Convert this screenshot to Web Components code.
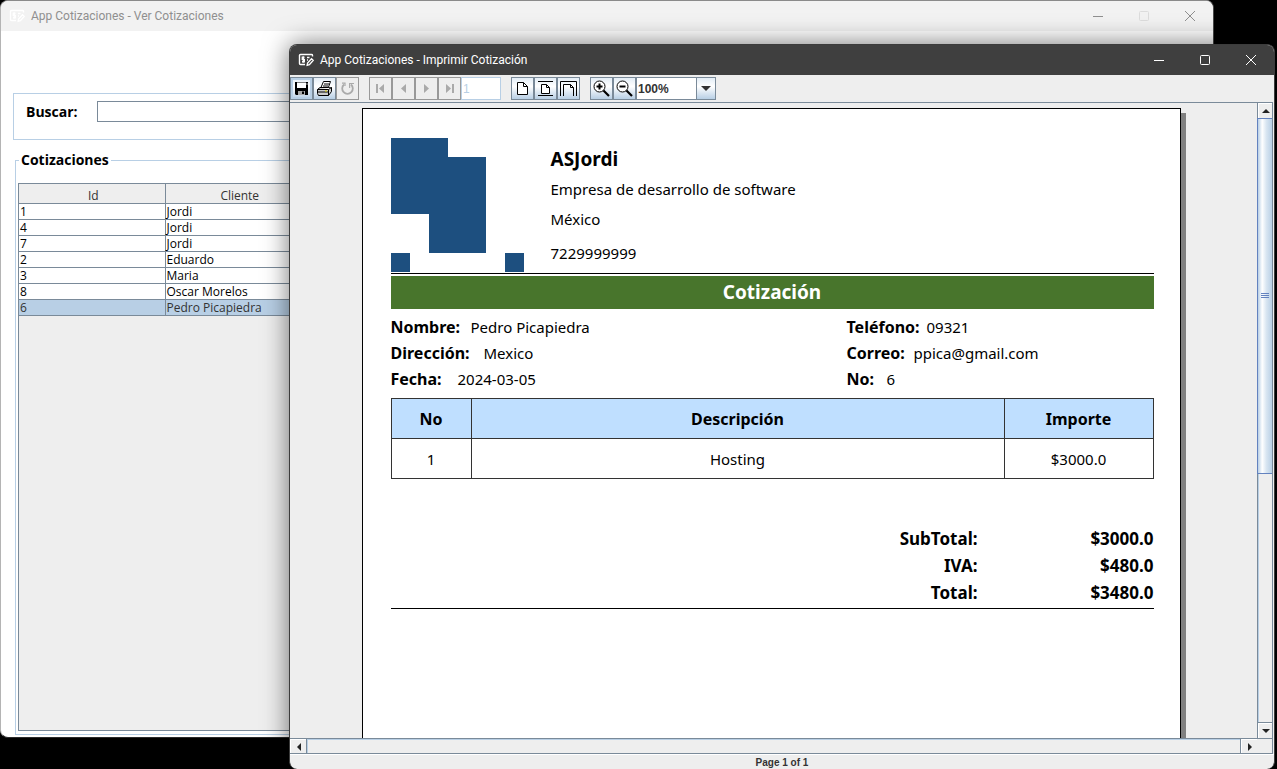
<!DOCTYPE html>
<html lang="es">
<head>
<meta charset="utf-8">
<title>App Cotizaciones</title>
<style>
  html, body { margin: 0; height: 100%; background: #000; overflow: hidden; }
</style>
</head>
<body>
<app-desktop></app-desktop>

<script>
const define = (name, html, setup) => {
  const template = document.createElement('template');
  template.innerHTML = html;
  customElements.define(name, class extends HTMLElement {
    constructor() {
      super();
      this.attachShadow({ mode: 'open' }).append(template.content.cloneNode(true));
    }
    connectedCallback() { if (setup) setup(this, this.shadowRoot); }
  });
};

/* Window frame with title bar and caption buttons */
define('desktop-window', `
  <style>
    :host { display: flex; flex-direction: column; box-sizing: border-box; overflow: hidden;
      border: 1px solid #3c3c3c; border-bottom: 0; border-radius: 8px; background: #eee; --bar: #3f3f3f; --ink: #fff; --mark: #fff; --box: #fff; }
    :host([inactive]) { border-color: #8a8a8a #4a4a4a #2a2a2a #b4b4b4; border-bottom: 1px solid #2a2a2a; background: #fff; --bar: #f2f2f2; --ink: #8f8f8f; --mark: #fff; --box: #dcdcdc; }
    header { display: flex; align-items: center; height: 30px; flex: none; background: var(--bar); color: var(--ink); }
    .mark { width: 16px; height: 16px; margin: 0 6px 0 8px; color: var(--mark); flex: none; }
    h1 { flex: 1; margin: 0; font: 12px/16px Roboto, "Open Sans", sans-serif; white-space: nowrap; }
    button { width: 46px; height: 30px; padding: 0; border: 0; background: none; color: inherit; display: grid; place-items: center; }
    button svg { width: 12px; height: 12px; }
    button.max { color: var(--box); }
    main { flex: 1; min-height: 0; display: flex; flex-direction: column; }
  </style>
  <header>
    <svg class="mark" viewBox="0 0 16 16" fill="none" stroke="currentColor" stroke-width="1.4">
      <path d="M14.5 4.5V3.2Q14.5 2.5 13.5 2.5H2.5Q1.5 2.5 1.5 3.5V11.5Q1.5 12.5 2.5 12.5H7"/>
      <path d="M6.5 5.2H4.3V7.4H6.3V9.7H4M5.3 4.2V10.8M9 5.5H11.5M9 8H10"/>
      <path d="M9.2 13.2L9.6 11L13.5 6.8L15.2 8.4L11.4 12.6Z"/>
    </svg>
    <h1></h1>
    <button aria-label="Minimizar"><svg viewBox="0 0 12 12" stroke="currentColor"><path d="M1 6.5H11"/></svg></button>
    <button class="max" aria-label="Maximizar"><svg viewBox="0 0 12 12" stroke="currentColor" fill="none"><rect x="1.5" y="1.5" width="9" height="9" rx="1"/></svg></button>
    <button aria-label="Cerrar"><svg viewBox="0 0 12 12" stroke="currentColor"><path d="M1 1L11 11M11 1L1 11"/></svg></button>
  </header>
  <main><slot></slot></main>`,
  (el, root) => { root.querySelector('h1').textContent = el.getAttribute('caption'); });

/* List of saved quotes */
define('quotes-list', `
  <style>
    :host { flex: 1; min-height: 0; display: flex; flex-direction: column; box-sizing: border-box; padding: 62px 12px 2px;
      font-family: "Open Sans", "Noto Sans", sans-serif; color: #000; }
    .search { display: flex; align-items: center; gap: 19px; box-sizing: border-box; height: 47px; padding: 0 12px 10px; border: 1px solid #b8cfe5; }
    label { font-size: 14px; font-weight: 700; line-height: 20px; }
    input { flex: 1; box-sizing: border-box; height: 21px; border: 1px solid #7a8a99; background: #fff; border-radius: 0; }
    fieldset { flex: 1; min-height: 0; min-width: 0; margin: 10px 0 0 2px; padding: 13px 2px 3px; border: 1px solid #b8cfe5; display: flex; }
    legend { padding: 0 2px; margin-left: 1px; font-size: 14px; font-weight: 700; line-height: 20px; }
    .pane { flex: 1; border: 1px solid #7a8a99; background: #eee; overflow: hidden; }
    table { border-collapse: collapse; table-layout: fixed; width: 294px; margin: -1px 0 0 -1px; font-size: 12px; }
    th, td { box-sizing: border-box; border: 1px solid #7a8a99; padding: 0 1px; line-height: 15px; height: 16px; text-align: left; font-weight: 400; white-space: nowrap; background: #fff; }
    th { height: 20px; padding: 3px 0 0 3px; text-align: center; background: #eee; color: #333; }
    tr.sel td { background: #b8cfe5; color: #333; }
  </style>
  <div class="search"><label for="q">Buscar:</label><input id="q"></div>
  <fieldset>
    <legend>Cotizaciones</legend>
    <div class="pane">
      <table>
        <thead><tr><th>Id</th><th>Cliente</th></tr></thead>
        <tbody>
          <tr><td>1</td><td>Jordi</td></tr>
          <tr><td>4</td><td>Jordi</td></tr>
          <tr><td>7</td><td>Jordi</td></tr>
          <tr><td>2</td><td>Eduardo</td></tr>
          <tr><td>3</td><td>Maria</td></tr>
          <tr><td>8</td><td>Oscar Morelos</td></tr>
          <tr class="sel"><td>6</td><td>Pedro Picapiedra</td></tr>
        </tbody>
      </table>
    </div>
  </fieldset>`);

/* Toolbar button */
define('tool-button', `
  <style>
    :host { display: block; }
    button { box-sizing: border-box; width: 23px; height: 23px; padding: 0 1px 1px 0; display: grid; place-items: center;
      border: 1px solid #7a8a99; border-radius: 0; background: linear-gradient(#e3edf6, #fff 40%, #b8cfe5); color: #000; }
    button:disabled { border-color: #999; background: #eee; color: #aaa; }
    :host([focused]) button { box-shadow: inset 0 0 0 2px #b8cfe5; }
    ::slotted(svg) { width: 17px; height: 17px; display: block; }
  </style>
  <button type="button"><slot></slot></button>`,
  (el, root) => {
    const b = root.querySelector('button');
    b.disabled = el.hasAttribute('off');
    b.setAttribute('aria-label', el.getAttribute('hint'));
  });

define('viewer-toolbar', `
  <style>
    :host { display: flex; align-items: center; gap: 10px; height: 27px; flex: none; font-family: "Liberation Sans", sans-serif; }
    .group { display: flex; }
    input, select { box-sizing: border-box; height: 23px; margin: 0; border: 1px solid #b8cfe5; border-radius: 0; background: #fff; }
    input { width: 40px; padding: 0 1px; font: 12px "Liberation Sans", sans-serif; color: #b8cfe5; }
    .combo { display: flex; position: relative; }
    select { appearance: none; width: 80px; padding: 0 1px; border-color: #7a8a99; font: bold 12px "Liberation Sans", sans-serif; color: #333; }
    .arrow { position: absolute; right: 0; top: 0; pointer-events: none; box-sizing: border-box; width: 20px; height: 23px; border: 1px solid #7a8a99;
      background: linear-gradient(#e3edf6, #fff 40%, #b8cfe5); display: grid; place-items: center; }
    .arrow svg { width: 10px; height: 5px; }
  </style>
  <div class="group">
    <tool-button hint="Guardar" focused><svg viewBox="0 0 17 17"><path d="M2 2H15V15H3L2 14Z"/><path d="M4 2.5H13V8H4Z" fill="#fff"/><path d="M5 11H12V15H5Z" fill="#aaa"/><path d="M9 11.5H11V14H9Z" fill="#000"/><path d="M14 3V5" stroke="#fff" stroke-width=".7"/></svg></tool-button>
    <tool-button hint="Imprimir"><svg viewBox="0 0 17 17" stroke="#000" fill="#fff"><path d="M4.5 8.5L7.5 1.5H14.5L12 8.5Z"/><path d="M8 4H13M7 6H12"/><path d="M1.5 9.5L4 7.5H15.5V11.5L12.5 15.5H2.5L1.5 13.5Z" fill="#ccc"/><path d="M1.5 9.5H12.5L15.5 7.5M12.5 9.5V15.5M1.5 12H12.5"/><path d="M9 11H11" stroke="#e8d800"/></svg></tool-button>
    <tool-button hint="Actualizar" off><svg viewBox="0 0 17 17" fill="none" stroke="#aaa" stroke-width="1.8"><path d="M5 4.5A5.3 5.3 0 1 0 12 4.5"/><path d="M10.6 8V3.5H15M3 3.2H6V6" stroke-width="1.2"/></svg></tool-button>
  </div>
  <div class="group">
    <tool-button hint="Primera" off><svg viewBox="0 0 17 17" fill="#aaa"><path d="M4 4H6V13H4ZM12 4V13L7 8.5Z"/></svg></tool-button>
    <tool-button hint="Anterior" off><svg viewBox="0 0 17 17" fill="#aaa"><path d="M11 4V13L6 8.5Z"/></svg></tool-button>
    <tool-button hint="Siguiente" off><svg viewBox="0 0 17 17" fill="#aaa"><path d="M6 4V13L11 8.5Z"/></svg></tool-button>
    <tool-button hint="Última" off><svg viewBox="0 0 17 17" fill="#aaa"><path d="M5 4V13L10 8.5ZM11 4H13V13H11Z"/></svg></tool-button>
    <input aria-label="Página" value="1" disabled>
  </div>
  <div class="group">
    <tool-button hint="Tamaño real"><svg viewBox="0 0 17 17" fill="#fff" stroke="#000"><path d="M3.5 2.5H9.5L13.5 6.5V14.5H3.5Z"/><path d="M9.5 2.5V6.5H13.5" fill="none"/></svg></tool-button>
    <tool-button hint="Ajustar página"><svg viewBox="0 0 17 17" fill="#fff" stroke="#000"><path d="M1 1.5H16M1 15.5H16M4.5 4.5H9.5L12.5 7.5V13.5H4.5Z"/><path d="M9.5 4.5V7.5H12.5" fill="none"/></svg></tool-button>
    <tool-button hint="Ajustar ancho"><svg viewBox="0 0 17 17" fill="none" stroke="#000"><path d="M.5 16V1.5H16.5V16M3.5 16V4.5H10.5L13.5 7.5V16M10.5 4.5V7.5H13.5"/></svg></tool-button>
  </div>
  <div class="group">
    <tool-button hint="Acercar"><svg viewBox="0 0 17 17" fill="#fff" stroke="#000"><path d="M10 10L16 16" stroke-width="2.2"/><circle cx="6.5" cy="6.5" r="5.5"/><path d="M3.5 6.5H9.5M6.5 3.5V9.5" stroke-width="2"/></svg></tool-button>
    <tool-button hint="Alejar"><svg viewBox="0 0 17 17" fill="#fff" stroke="#000"><path d="M10 10L16 16" stroke-width="2.2"/><circle cx="6.5" cy="6.5" r="5.5"/><path d="M3.5 6.5H9.5" stroke-width="2"/></svg></tool-button>
    <div class="combo">
      <select aria-label="Zoom"><option>100%</option></select>
      <span class="arrow"><svg viewBox="0 0 10 5"><path d="M0 0H10L5 5Z" fill="#333"/></svg></span>
    </div>
  </div>`);

/* Scroll bar, vertical by default */
define('scroll-bar', `
  <style>
    :host { display: flex; flex-direction: column; box-sizing: border-box; background: #eee; border: 1px solid #7a8a99; border-top: 0; border-bottom: 0; width: 16px; }
    :host([horizontal]) { flex-direction: row; width: auto; height: 16px; border: 1px solid #7a8a99; border-width: 1px 0; }
    button { flex: none; box-sizing: border-box; width: 14px; height: 15px; padding: 0; border: 0; border-top: 1px solid #fff; border-left: 1px solid #fff; background: #eee; display: grid; place-items: center; }
    :host([horizontal]) button { width: 16px; height: 14px; }
    svg { width: 8px; height: 8px; fill: #222; }
    .track { flex: 1; box-sizing: border-box; display: flex; border: 0 solid #7a8a99; border-width: 1px 0; box-shadow: inset 1px 0 #b8cfe5; }
    :host([horizontal]) .track { border-width: 0 1px; box-shadow: inset 1px 1px #b8cfe5; }
    .thumb { flex: 1; height: 59%; box-sizing: border-box; border: 1px solid #6382bf; border-right: 0; margin: -1px 0 0 -1px;
      background: linear-gradient(90deg, #b8cfe5, #fff 30%, #d8e5f1 60%, #b8cfe5); display: grid; place-items: center; }
    .thumb svg { stroke: #6382bf; }
    :host([horizontal]) .thumb, :host([horizontal]) .v, :host(:not([horizontal])) .h { display: none; }
  </style>
  <button aria-label="Retroceder"><svg class="v" viewBox="0 0 8 8"><path d="M0 6L4 2L8 6Z"/></svg><svg class="h" viewBox="0 0 8 8"><path d="M6 0V8L2 4Z"/></svg></button>
  <div class="track"><div class="thumb"><svg viewBox="0 0 8 8"><path d="M0 1.5H8M0 3.5H8M0 5.5H8"/></svg></div></div>
  <button aria-label="Avanzar"><svg class="v" viewBox="0 0 8 8"><path d="M0 2L4 6L8 2Z"/></svg><svg class="h" viewBox="0 0 8 8"><path d="M2 0V8L6 4Z"/></svg></button>`);

define('data-field', `
  <style>
    :host { display: flex; line-height: 26px; white-space: nowrap; }
    b { flex: none; min-width: var(--label, 80px); font-size: 16px; }
  </style>
  <b></b><span><slot></slot></span>`,
  (el, root) => { root.querySelector('b').textContent = el.getAttribute('label'); });

/* Printed quote */
define('quote-page', `
  <style>
    :host { display: block; box-sizing: border-box; width: 819px; height: 1060px; padding: 29px 26px 0 28px; border: 1px solid #000;
      background: #fff; box-shadow: 5px 5px #808080; color: #000; font: 15px/20px "Noto Sans", sans-serif; }
    .head { display: flex; gap: 27px; height: 135px; border-bottom: 1px solid #000; }
    .logo { width: 133px; height: 134px; flex: none; }
    .company { display: flex; flex-direction: column; gap: 10px; padding-top: 11px; }
    .company p, h2, h3 { margin: 0; }
    .company .tel { margin-top: 4px; }
    h2 { font-size: 19px; line-height: 20px; }
    h3 { margin-top: 2px; background: #48752c; color: #fff; font-size: 19px; line-height: 33px; text-align: center; }
    .info { display: grid; grid-template-columns: 456px 1fr; margin: 5px 0 6px; }
    table { width: 100%; border-collapse: collapse; table-layout: fixed; }
    .items th, .items td { box-sizing: border-box; height: 40px; padding: 0; border: 1px solid #333; text-align: center; }
    .items th { background: #bfdfff; font-size: 16px; }
    .totals { margin-top: 46px; border-bottom: 1px solid #000; padding-bottom: 2px; }
    .totals th, .totals td { padding: 0; height: 27px; text-align: right; font-size: 17px; font-weight: 700; }
  </style>
  <div class="head">
    <svg class="logo" viewBox="0 0 133 134" fill="#1d4f7f" role="img" aria-label="ASJordi"><path d="M0 0H57V19H95V115H38V76H0ZM0 115H19V134H0ZM114 115H133V134H114Z"/></svg>
    <div class="company"><h2>ASJordi</h2><p>Empresa de desarrollo de software</p><p>México</p><p class="tel">7229999999</p></div>
  </div>
  <h3>Cotización</h3>
  <div class="info">
    <data-field label="Nombre:" style="--label:80px">Pedro Picapiedra</data-field>
    <data-field label="Teléfono:" style="--label:80px">09321</data-field>
    <data-field label="Dirección:" style="--label:93px">Mexico</data-field>
    <data-field label="Correo:" style="--label:67px">ppica@gmail.com</data-field>
    <data-field label="Fecha:" style="--label:67px">2024-03-05</data-field>
    <data-field label="No:" style="--label:40px">6</data-field>
  </div>
  <table class="items">
    <colgroup><col style="width:80px"><col><col style="width:149px"></colgroup>
    <thead><tr><th>No</th><th>Descripción</th><th>Importe</th></tr></thead>
    <tbody><tr><td>1</td><td>Hosting</td><td>$3000.0</td></tr></tbody>
  </table>
  <div class="totals">
    <table>
      <colgroup><col><col style="width:176px"></colgroup>
      <tr><th>SubTotal:</th><td>$3000.0</td></tr>
      <tr><th>IVA:</th><td>$480.0</td></tr>
      <tr><th>Total:</th><td>$3480.0</td></tr>
    </table>
  </div>`);

define('print-viewer', `
  <style>
    :host { flex: 1; min-height: 0; display: flex; flex-direction: column; }
    .area { flex: 1; min-height: 0; display: grid; grid-template: minmax(0, 1fr) 16px / minmax(0, 1fr) 16px; border-top: 1px solid #7a8a99; margin-right: 1px; }
    .port { overflow: hidden; display: flex; justify-content: center; padding: 5px 5px 0 0; }
    quote-page { flex: none; }
    .corner { border: 1px solid #7a8a99; border-left: 0; }
    footer { flex: none; border-top: 1px solid #fff; padding-top: 1px; font: bold 10px/13px "Liberation Sans", sans-serif; color: #333; text-align: center; }
  </style>
  <viewer-toolbar></viewer-toolbar>
  <div class="area">
    <div class="port"><quote-page></quote-page></div>
    <scroll-bar></scroll-bar>
    <scroll-bar horizontal></scroll-bar>
    <div class="corner"></div>
  </div>
  <footer>Page 1 of 1</footer>`);

define('app-desktop', `
  <style>
    :host { display: block; position: relative; height: 100vh; min-height: 400px; overflow: hidden; background: #000; }
    desktop-window { position: absolute; }
    .list { inset: 0 63px 31px 0; }
    .print { inset: 44px 2px 0 289px; box-shadow: 0 0 26px rgba(0, 0, 0, .55); }
  </style>
  <desktop-window class="list" inactive caption="App Cotizaciones - Ver Cotizaciones"><quotes-list></quotes-list></desktop-window>
  <desktop-window class="print" caption="App Cotizaciones - Imprimir Cotización"><print-viewer></print-viewer></desktop-window>`);
</script>
</body>
</html>
